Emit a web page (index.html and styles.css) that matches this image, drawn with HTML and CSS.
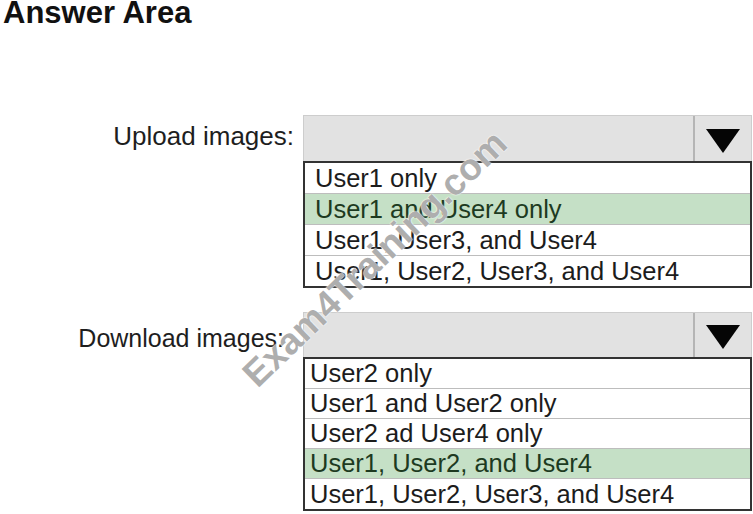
FILE: index.html
```html
<!DOCTYPE html>
<html lang="en">
<head>
<meta charset="utf-8">
<title>Answer Area</title>
<link rel="stylesheet" href="styles.css">
</head>
<body>
<div class="page">
  <h1 class="title">Answer Area</h1>

  <div class="field field-upload">
    <div class="label label-upload">Upload images:</div>
    <div class="dropdown">
      <div class="select">
        <div class="select-value"></div>
        <div class="select-btn">
          <svg class="arrow" width="36" height="26" viewBox="0 0 36 26"><polygon points="1,1 35,1 18,25" fill="#050505"/></svg>
        </div>
      </div>
      <ul class="options options-upload">
        <li class="opt">User1 only</li>
        <li class="opt opt-selected">User1 and User4 only</li>
        <li class="opt">User1, User3, and User4</li>
        <li class="opt">User1, User2, User3, and User4</li>
      </ul>
    </div>
  </div>

  <div class="field field-download">
    <div class="label label-download">Download images:</div>
    <div class="dropdown">
      <div class="select select-download">
        <div class="select-value"></div>
        <div class="select-btn">
          <svg class="arrow" width="36" height="26" viewBox="0 0 36 26"><polygon points="1,1 35,1 18,25" fill="#050505"/></svg>
        </div>
      </div>
      <ul class="options options-download">
        <li class="opt">User2 only</li>
        <li class="opt">User1 and User2 only</li>
        <li class="opt">User2 ad User4 only</li>
        <li class="opt opt-selected">User1, User2, and User4</li>
        <li class="opt">User1, User2, User3, and User4</li>
      </ul>
    </div>
  </div>

  <div class="watermark">Exam4Training.com</div>
</div>
</body>
</html>
```
FILE: styles.css
```css
html, body {
  margin: 0;
  padding: 0;
  background: #ffffff;
}

body {
  font-family: "Liberation Sans", Arial, sans-serif;
  color: #1c1c1c;
  width: 753px;
  height: 514px;
  overflow: hidden;
}

.page {
  position: relative;
  width: 753px;
  height: 514px;
}

.title {
  margin: 0;
  padding-left: 3px;
  font-size: 31px;
  line-height: 26px;
  font-weight: bold;
  color: #111;
}

.field {
  display: flex;
  align-items: flex-start;
}

.field-upload {
  margin-top: 89px;
}

.field-download {
  margin-top: 24px;
}

.label {
  width: 303px;
  box-sizing: border-box;
  text-align: right;
  font-size: 26px;
  line-height: 30px;
  color: #1e1e1e;
}

.label-upload {
  padding-right: 9px;
  margin-top: 6px;
}

.label-download {
  font-size: 25px;
  padding-right: 19px;
  margin-top: 11px;
}

.dropdown {
  width: 449px;
}

.select {
  display: flex;
  height: 46px;
  box-sizing: border-box;
  background: #e2e2e2;
  border: 1px solid #cdcdcd;
  border-bottom: none;
}

.select-download {
  height: 45px;
}

.select-value {
  flex: 1;
}

.select-btn {
  width: 58px;
  border-left: 2px solid #b5b5b5;
  display: flex;
  align-items: center;
  justify-content: center;
  padding-top: 4px;
  box-sizing: border-box;
}

.arrow {
  display: block;
}

.options {
  list-style: none;
  margin: 0;
  padding: 0;
  border: 2px solid #333333;
  background: #ffffff;
}

.opt {
  height: 30px;
  font-size: 25.5px;
  line-height: 30px;
  white-space: nowrap;
  border-bottom: 1px solid #bdbdbd;
  color: #1c1c1c;
}

.opt:last-child {
  border-bottom: none;
}

.options-upload .opt {
  padding-left: 10px;
}

.options-download .opt {
  padding-left: 5px;
  height: 29px;
  line-height: 29px;
}

.options-download .opt:last-child {
  height: 30px;
  line-height: 30px;
}

.opt-selected {
  background: #c5e0c6;
  color: #1d3a21;
}

.watermark {
  position: absolute;
  left: 375px;
  top: 259px;
  transform: translate(-50%, -50%) rotate(-44deg);
  font-size: 37px;
  font-weight: bold;
  white-space: nowrap;
  color: rgba(120, 120, 120, 0.6);
  text-shadow: 0 0 2px #ffffff, 0 0 1px #ffffff;
  pointer-events: none;
}
```
